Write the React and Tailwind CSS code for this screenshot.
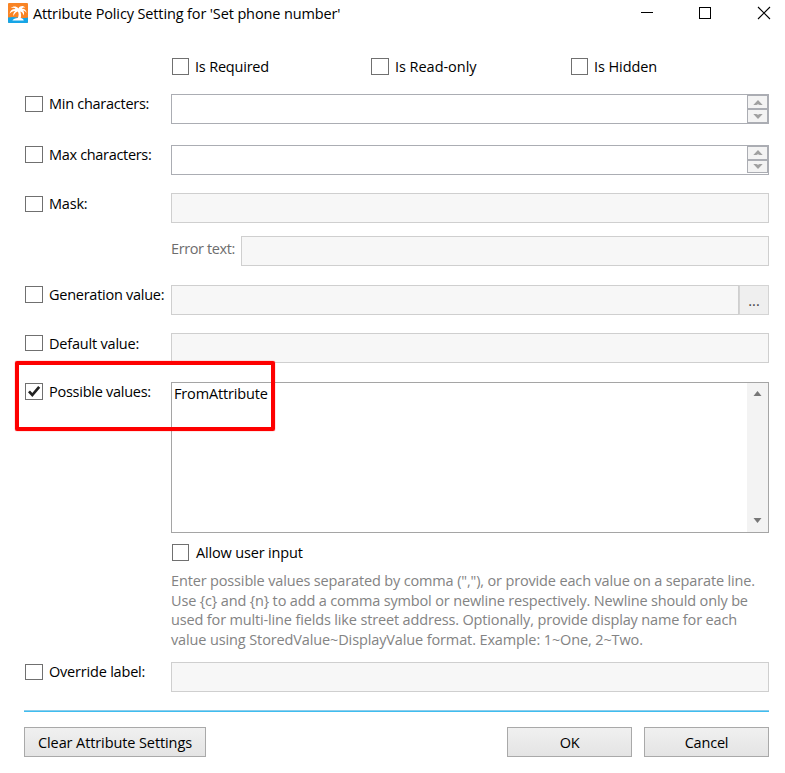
import { useState } from 'react';
import clsx from 'clsx';

const HELP_LINES = [
  { text: 'Enter possible values separated by comma (","), or provide each value on a separate line.', tracking: 'tracking-[-0.15px]' },
  { text: 'Use {c} and {n} to add a comma symbol or newline respectively. Newline should only be', tracking: 'tracking-[-0.155px]' },
  { text: 'used for multi-line fields like street address. Optionally, provide display name for each', tracking: 'tracking-[-0.15px]' },
  { text: 'value using StoredValue~DisplayValue format. Example: 1~One, 2~Two.', tracking: 'tracking-[-0.125px]' },
];

function PalmLogo() {
  return (
    <svg width="20" height="20" viewBox="0 0 20 20" className="shrink-0">
      <rect width="20" height="20" rx="1" fill="#f98425" />
      <path d="M0 14.5 Q5 13.5 10 14.5 T20 14.5 V19 Q20 20 19 20 H1 Q0 20 0 19Z" fill="#16a5e6" />
      <path
        d="M10.4 5.4 C8.4 3 5 2.9 2.8 5 C4.9 4.6 6.6 5 7.4 5.9 C4.2 5.8 2 7.6 1.6 10.8 C3.4 8.6 5.4 7.8 7.2 8 C5.6 9.2 5 11 5.4 13 C6.6 10.4 8.4 8.9 9.9 8.6 C10.9 10.6 10.9 12.8 9.8 15 C7.6 15.2 5.2 16 4.4 17.4 H15.8 C15.4 16.2 14.2 15.3 12.7 15 C13.4 12.8 13.2 10.4 12.2 8.4 C14 8.8 15.2 10.2 15.4 12.6 C16.6 10.4 16.2 8.6 15 7.6 C16.6 7.8 17.7 8.6 18.5 10 C18.5 7.2 16.5 5.4 13.8 5.7 C14.6 4.7 15.8 4.2 17.4 4.6 C15.2 2.2 12 2.6 10.4 5.4Z"
        fill="#fff"
      />
    </svg>
  );
}

function Checkbox({ checked, onChange, className }) {
  return (
    <button
      type="button"
      role="checkbox"
      aria-checked={checked}
      onClick={onChange}
      className={clsx('flex items-center justify-center shrink-0 border border-[#707070] bg-white', className)}
    >
      {checked && (
        <svg width="16" height="15" viewBox="0 0 16 15" className="shrink-0">
          <path d="M3 7.4 L6.3 11 L13.2 2.8" fill="none" stroke="#212121" strokeWidth="2.7" />
        </svg>
      )}
    </button>
  );
}

function FieldRow({ label, tracking, checked, onChange, boxClass, className, children }) {
  return (
    <div className={clsx('flex items-start', className)}>
      <div className="flex w-[147px] shrink-0 items-start pl-px">
        <Checkbox checked={checked} onChange={onChange} className={boxClass} />
        <span className={clsx('ml-1.5 whitespace-nowrap', tracking)}>{label}</span>
      </div>
      {children}
    </div>
  );
}

function DisabledInput() {
  return <div className="h-[30px] flex-1 border border-[#cfcfcf] bg-[#f7f7f7]" />;
}

function Spinner({ short }) {
  return (
    <div className="flex h-[30px] flex-1 justify-end border border-[#abadb3] bg-white">
      <div className={clsx('flex w-[21px] flex-col', short ? 'h-[27px]' : 'h-7')}>
        <div className="flex flex-1 items-center justify-center border border-[#abadb3] bg-[#f3f3f3]">
          <svg width="10" height="5" viewBox="0 0 10 5"><path d="M0.3 5 L5 0 L9.7 5 H6.7 L5 4.2 L3.3 5Z" fill="#a0a0a0" /></svg>
        </div>
        <div className="flex flex-1 items-center justify-center border border-[#abadb3] bg-[#f3f3f3]">
          <svg width="10" height="5" viewBox="0 0 10 5"><path d="M0.3 0 L5 5 L9.7 0 H6.7 L5 0.8 L3.3 0Z" fill="#a0a0a0" /></svg>
        </div>
      </div>
    </div>
  );
}

function DialogButton({ className, children }) {
  return (
    <button
      type="button"
      className={clsx('h-[30px] whitespace-nowrap border border-[#a9a9a9] bg-linear-to-b from-[#f0f0f0] to-[#e4e4e4] pt-0.5 leading-5', className)}
    >
      {children}
    </button>
  );
}

export default function App() {
  const [state, setState] = useState({ possible: true });
  const bind = (key) => ({
    checked: !!state[key],
    onChange: () => setState((s) => ({ ...s, [key]: !s[key] })),
  });

  return (
    <div className="relative h-[773px] w-[785px] overflow-hidden bg-white font-['Open_Sans','Noto_Sans',sans-serif] text-[14.5px] text-black">
      {/* Title bar */}
      <header className="flex h-7 items-start pl-2 pt-[3px]">
        <PalmLogo />
        <h1 className="ml-[5px] whitespace-nowrap leading-[21px] tracking-[-0.13px]">Attribute Policy Setting for 'Set phone number'</h1>
        <div className="ml-auto flex pr-[14px] pt-[3px]">
          <svg width="130" height="14" viewBox="0 0 130 14" fill="none" stroke="#000">
            <path d="M0 6.5 H12" />
            <rect x="58.5" y="1.5" width="11" height="11" />
            <path d="M117 1 L129 13 M129 1 L117 13" strokeWidth="1.1" />
          </svg>
        </div>
      </header>

      <main className="pl-6 pr-4">
        <div className="flex h-[66px] items-start pl-[148px] pt-[30px]">
          <div className="flex w-[199px]">
            <Checkbox {...bind('required')} className="size-[17px]" />
            <span className="ml-1.5 leading-[18px] tracking-[-0.2px]">Is Required</span>
          </div>
          <div className="flex w-[200px]">
            <Checkbox {...bind('readOnly')} className="h-[17px] w-[18px]" />
            <span className="ml-1.5 leading-[18px] tracking-[-0.04px]">Is Read-only</span>
          </div>
          <div className="flex">
            <Checkbox {...bind('hidden')} className="size-[17px]" />
            <span className="ml-1.5 leading-[18px] tracking-[-0.08px]">Is Hidden</span>
          </div>
        </div>

        <FieldRow label="Min characters:" tracking="leading-5 tracking-[-0.27px]" className="h-[51px]" boxClass="mt-0.5 h-4 w-[18px]" {...bind('min')}>
          <Spinner />
        </FieldRow>
        <FieldRow label="Max characters:" tracking="leading-5 tracking-[-0.32px]" className="h-12" boxClass="mt-px h-[17px] w-[18px]" {...bind('max')}>
          <Spinner short />
        </FieldRow>
        <FieldRow label="Mask:" tracking="leading-[22px] tracking-[-0.2px]" className="h-[43px]" boxClass="mt-[3px] h-4 w-[18px]" {...bind('mask')}>
          <DisabledInput />
        </FieldRow>
        <div className="flex h-[49px] items-start pl-[147px]">
          <span className="w-[70px] whitespace-nowrap leading-[26px] tracking-[-0.38px] text-[#6d6d6d]">Error text:</span>
          <DisabledInput />
        </div>
        <FieldRow label="Generation value:" tracking="leading-5 tracking-[-0.26px]" className="h-12" boxClass="mt-px h-[17px] w-[18px]" {...bind('generation')}>
          <DisabledInput />
          <div className="flex h-[30px] w-[30px] justify-center border border-[#d4d4d4] bg-[#efefef] leading-[30px] text-[#444]">...</div>
        </FieldRow>
        <FieldRow label="Default value:" tracking="leading-[22px] tracking-[-0.2px]" className="h-[49px]" boxClass="mt-0.5 h-4 w-[18px]" {...bind('default')}>
          <DisabledInput />
        </FieldRow>
        <FieldRow label="Possible values:" tracking="leading-5 tracking-[-0.26px]" className="h-[162px]" boxClass="mt-px h-[17px] w-[18px]" {...bind('possible')}>
          <div className="flex h-[151px] flex-1 border border-[#a5a5a5] bg-white">
            <div className="flex-1 pl-0.5 pt-px leading-5 tracking-[-0.16px]">FromAttribute</div>
            <div className="flex w-[21px] flex-col items-center justify-between bg-[#f3f3f3] pb-[9px] pt-2">
              <svg width="9" height="5" viewBox="0 0 9 5"><path d="M0.5 5 L4.5 0 L8.5 5Z" fill="#777" /></svg>
              <svg width="9" height="5" viewBox="0 0 9 5"><path d="M0.5 0 L4.5 5 L8.5 0Z" fill="#777" /></svg>
            </div>
          </div>
        </FieldRow>

        <div className="flex h-[27px] items-start pl-[148px]">
          <Checkbox {...bind('userInput')} className="size-[17px]" />
          <span className="ml-[7px] leading-[18px] tracking-[-0.16px]">Allow user input</span>
        </div>
        <div className="h-[91px] pl-[147px] leading-[19.7px] text-[#838383]">
          {HELP_LINES.map((line) => (
            <p key={line.text} className={clsx('whitespace-nowrap', line.tracking)}>{line.text}</p>
          ))}
        </div>

        <FieldRow label="Override label:" tracking="leading-5 tracking-[-0.2px]" className="h-12" boxClass="mt-0.5 h-4 w-[18px]" {...bind('override')}>
          <DisabledInput />
        </FieldRow>

        <div className="h-0.5 border-t border-[#8ccdea] bg-[#3fbdf0]" />
        <footer className="flex gap-3 pt-[15px]">
          <DialogButton className="mr-auto w-[182px] tracking-[-0.1px]">Clear Attribute Settings</DialogButton>
          <DialogButton className="w-[125px] tracking-[-0.3px]">OK</DialogButton>
          <DialogButton className="w-[125px] tracking-[-0.2px]">Cancel</DialogButton>
        </footer>
      </main>

      {/* Highlight over the possible values row */}
      <div className="pointer-events-none absolute left-[15px] top-[361px] h-[70px] w-[260px] rounded-[2px] border-4 border-[#fe0000] shadow-[0_0_1px_#ff0000]" />
    </div>
  );
}
